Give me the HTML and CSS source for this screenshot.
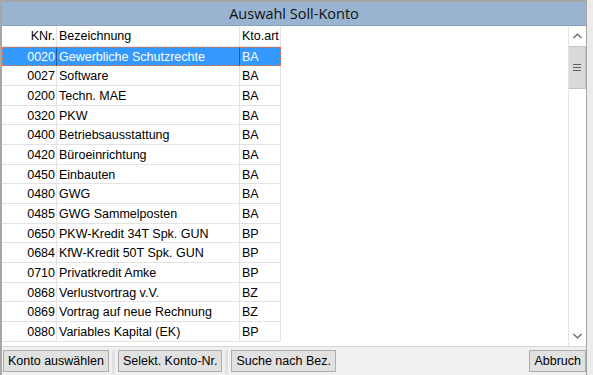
FILE: index.html
```html
<!DOCTYPE html>
<html lang="de">
<head>
    <meta charset="UTF-8">
    <title>Auswahl Soll-Konto</title>
    <link rel="stylesheet" href="styles.css">
</head>
<body>

<div class="window">
    <div class="caption">Auswahl Soll-Konto</div>

    <div class="list">
        <div class="grid">
            <div class="cell head num">KNr.</div>
            <div class="cell head">Bezeichnung</div>
            <div class="cell head">Kto.art</div>

            <div class="row selected">
                <div class="cell num">0020</div>
                <div class="cell">Gewerbliche Schutzrechte</div>
                <div class="cell">BA</div>
            </div>
            <div class="cell num">0027</div><div class="cell">Software</div><div class="cell">BA</div>
            <div class="cell num">0200</div><div class="cell">Techn. MAE</div><div class="cell">BA</div>
            <div class="cell num">0320</div><div class="cell">PKW</div><div class="cell">BA</div>
            <div class="cell num">0400</div><div class="cell">Betriebsausstattung</div><div class="cell">BA</div>
            <div class="cell num">0420</div><div class="cell">Büroeinrichtung</div><div class="cell">BA</div>
            <div class="cell num">0450</div><div class="cell">Einbauten</div><div class="cell">BA</div>
            <div class="cell num">0480</div><div class="cell">GWG</div><div class="cell">BA</div>
            <div class="cell num">0485</div><div class="cell">GWG Sammelposten</div><div class="cell">BA</div>
            <div class="cell num">0650</div><div class="cell">PKW-Kredit 34T Spk. GUN</div><div class="cell">BP</div>
            <div class="cell num">0684</div><div class="cell">KfW-Kredit 50T Spk. GUN</div><div class="cell">BP</div>
            <div class="cell num">0710</div><div class="cell">Privatkredit Amke</div><div class="cell">BP</div>
            <div class="cell num">0868</div><div class="cell">Verlustvortrag v.V.</div><div class="cell">BZ</div>
            <div class="cell num">0869</div><div class="cell">Vortrag auf neue Rechnung</div><div class="cell">BZ</div>
            <div class="cell num">0880</div><div class="cell">Variables Kapital (EK)</div><div class="cell">BP</div>
        </div>

        <div class="scrollbar">
            <div class="arrow">
                <svg width="9" height="6" viewBox="0 0 9 6"><path d="M0.5 5 L4.5 1 L8.5 5" fill="none" stroke="#606060" stroke-width="1.2"/></svg>
            </div>
            <div class="thumb">
                <svg width="8" height="7" viewBox="0 0 8 7"><path d="M0 0.5 H8 M0 3.5 H8 M0 6.5 H8" stroke="#606060" stroke-width="1"/></svg>
            </div>
            <div class="track"></div>
            <div class="arrow">
                <svg width="9" height="6" viewBox="0 0 9 6"><path d="M0.5 1 L4.5 5 L8.5 1" fill="none" stroke="#606060" stroke-width="1.2"/></svg>
            </div>
        </div>
    </div>

    <div class="footer">
        <button class="btn">Konto auswählen</button>
        <span class="sep"></span>
        <button class="btn">Selekt. Konto-Nr.</button>
        <span class="sep"></span>
        <button class="btn">Suche nach Bez.</button>
        <button class="btn cancel">Abbruch</button>
    </div>
</div>

</body>
</html>
```

FILE: styles.css
```css
body {
    margin: 0;
    background-color: #ececec;
    font-family: "Liberation Sans", Arial, sans-serif;
    font-size: 12.5px;
    color: #000;
}
.window {
    width: 587px;
    height: 375px;
    box-sizing: border-box;
    border: 2px solid #a6a6a6;
    border-bottom: none;
    border-right: 1px solid #a6a6a6;
    background-color: #f0f0f0;
    display: flex;
    flex-direction: column;
}
.caption {
    height: 23px;
    line-height: 24px;
    background-color: #99b4d1;
    border-bottom: 1px solid #8aa3bf;
    text-align: center;
    font-family: "Open Sans", sans-serif;
    font-size: 14.5px;
    color: #111;
}
.list {
    height: 320px;
    display: flex;
    background-color: #fff;
}
.grid {
    flex: 1;
    display: grid;
    grid-template-columns: 55px 183px 41px;
    grid-template-rows: 20.5px;
    grid-auto-rows: 19.7px;
    align-content: start;
}
.row {
    display: contents;
}
.cell {
    line-height: 20px;
    padding-left: 2px;
    border-right: 1px solid #e3e3e3;
    border-bottom: 1px solid #e3e3e3;
    white-space: nowrap;
    overflow: hidden;
}
.head {
    background-color: #fff;
}
.num {
    text-align: right;
    padding-left: 0;
    padding-right: 1px;
}
.selected .cell {
    background-color: #3399ff;
    color: #fff;
    border-top: 1px dashed #e8703a;
    border-bottom: 1px dashed #e8703a;
    border-right: 1px solid #1e5d9a;
    line-height: 18px;
}
.selected .cell:first-child {
    border-left: 1px dashed #e8703a;
}
.selected .cell:last-child {
    border-right: 1px dashed #e8703a;
}
.scrollbar {
    width: 17px;
    display: flex;
    flex-direction: column;
    border-left: 1px solid #e3e3e3;
    background-color: #fff;
}
.arrow {
    height: 20px;
    display: flex;
    align-items: center;
    justify-content: center;
}
.thumb {
    height: 41px;
    background-color: #dadada;
    border: 1px solid #c4c4c4;
    border-left: none;
    display: flex;
    align-items: center;
    justify-content: center;
}
.track {
    flex: 1;
}
.footer {
    flex: 1;
    display: flex;
    align-items: flex-start;
    gap: 3px;
    padding: 3px 0 0 1px;
    border-top: 1px solid #d5d5d5;
}
.btn {
    font-family: "Liberation Sans", Arial, sans-serif;
    font-size: 12.5px;
    height: 22px;
    padding: 0 4px;
    background-color: #e1e1e1;
    border: 1px solid #adadad;
    color: #000;
}
.sep {
    width: 3px;
    height: 24px;
    background-color: #e2e2e2;
}
.cancel {
    margin-left: auto;
}
```
